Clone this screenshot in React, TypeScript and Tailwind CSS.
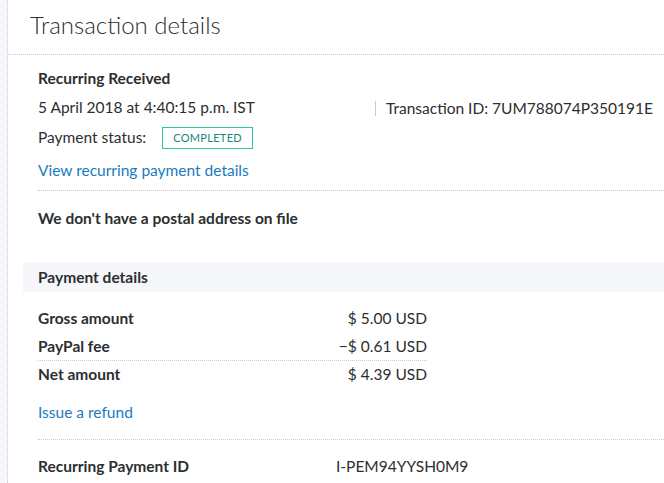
export default function App() {
  const rows = [
    { label: 'Gross amount', value: '$ 5.00 USD' },
    { label: 'PayPal fee', value: '−$ 0.61 USD', line: true },
    { label: 'Net amount', value: '$ 4.39 USD' },
  ]

  return (
    <div className="flex min-h-[483px] bg-white text-[#2c2e2f] text-[15.5px] font-['Lato','Noto_Sans',sans-serif]">
      <div className="w-[8px] shrink-0 bg-[#f5f7fa] border-r border-dotted border-[#c8ccd0]" />
      <div className="flex-1 min-w-0">
        <div className="h-[55px] pl-[22px] pt-[9px] border-b border-dotted border-[#c8ccd0]">
          <h1 className="text-[24px] font-light leading-[32px]">Transaction details</h1>
        </div>

        <div className="ml-[30px] pt-[13px] pb-[10px] border-b border-dotted border-[#c8ccd0]">
          <div className="h-[20px] leading-[20px] font-bold">Recurring Received</div>
          <div className="mt-[10px] h-[20px] flex items-center">
            <span className="w-[337px] shrink-0">5 April 2018 at 4:40:15 p.m. IST</span>
            <span className="border-l border-[#c8ccd0] pl-[10px] leading-[15px]">Transaction ID: 7UM788074P350191E</span>
          </div>
          <div className="mt-[9px] h-[22px] flex items-center">
            <span>Payment status:</span>
            <span className="ml-[16px] h-[22px] px-[10px] flex items-center border border-[#2cc79f] text-[#19867a] text-[11px] tracking-[0.3px]">COMPLETED</span>
          </div>
          <div className="mt-[11px] h-[20px] leading-[20px] text-[#1a7bc0]">View recurring payment details</div>
        </div>

        <div className="ml-[30px] pt-[17px] h-[20px] box-content leading-[20px] font-bold">We don't have a postal address on file</div>

        <div className="mt-[34px] ml-[15px] h-[30px] pl-[15px] pt-[1px] flex items-center bg-[#f5f7fa] font-bold">Payment details</div>

        <div className="ml-[30px] mt-[13px] w-[389px]">
          {rows.map(r => (
            <div
              key={r.label}
              className={`h-[28px] flex items-center justify-between ${r.line ? 'border-b border-dotted border-[#c8ccd0]' : ''}`}
            >
              <span className="font-bold">{r.label}</span>
              <span>{r.value}</span>
            </div>
          ))}
        </div>

        <div className="ml-[30px] pt-[13px] pb-[17px] border-b border-dotted border-[#c8ccd0]">
          <div className="h-[20px] leading-[20px] text-[#1a7bc0]">Issue a refund</div>
        </div>

        <div className="ml-[30px] pt-[17px] h-[20px] box-content flex items-center">
          <span className="w-[298px] font-bold">Recurring Payment ID</span>
          <span>I-PEM94YYSH0M9</span>
        </div>
      </div>
    </div>
  )
}
